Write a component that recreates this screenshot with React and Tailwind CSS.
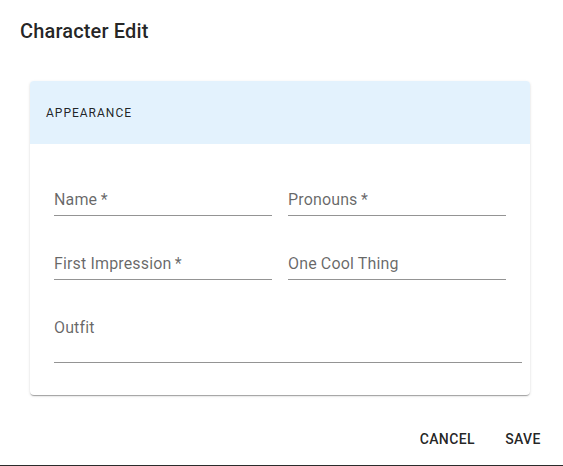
import React from 'react';

const Field = ({ label, required, tall }) => (
  <div className={`relative border-b border-black/[0.42] ${tall ? 'h-[67px]' : 'h-[48px]'}`}>
    <label className="absolute left-0 top-[20px] text-[16px] leading-[23px] text-black/60 tracking-[0.009em]">
      {label}
      {required && <span>{'\u2009*'}</span>}
    </label>
  </div>
);

const App = () => {
  return (
    <div
      className="w-[563px] h-[466px] bg-white flex flex-col"
      style={{ fontFamily: 'Roboto, "Liberation Sans", Arial, sans-serif' }}
    >
      {/* title */}
      <h2 className="pt-[15px] px-5 text-[20px] leading-8 font-medium tracking-[0.0075em] text-black/[0.87]">
        Character Edit
      </h2>

      {/* card */}
      <div className="mt-[34px] ml-[30px] w-[500px] rounded bg-white overflow-hidden shadow-[0px_2px_1px_-1px_rgba(0,0,0,0.2),0px_1px_1px_0px_rgba(0,0,0,0.14),0px_1px_3px_0px_rgba(0,0,0,0.12)]">
        <div className="h-[63px] bg-[#e3f2fd] flex items-center pl-4">
          <span className="text-[12px] uppercase tracking-[0.08333em] text-black/[0.87]">Appearance</span>
        </div>
        <div className="pl-6 pr-2 pt-6 pb-8">
          <div className="mr-4 grid grid-cols-2 gap-x-4 gap-y-4">
            <Field label="Name" required />
            <Field label="Pronouns" required />
            <Field label="First Impression" required />
            <Field label="One Cool Thing" />
          </div>
          <div className="mt-4">
            <Field label="Outfit" tall />
          </div>
        </div>
      </div>

      {/* actions */}
      <div className="flex justify-end gap-2 px-2 mt-[26px]">
        <button className="min-w-16 px-2 py-1.5 text-[14px] leading-[24.5px] font-medium uppercase tracking-[0.02857em] text-black/[0.87]">
          Cancel
        </button>
        <button className="min-w-16 px-2 py-1.5 text-[14px] leading-[24.5px] font-medium uppercase tracking-[0.02857em] text-black/[0.87]">
          Save
        </button>
      </div>

      <div className="mt-auto h-px bg-[#2b2b2b]" />
    </div>
  );
};

export default App;
